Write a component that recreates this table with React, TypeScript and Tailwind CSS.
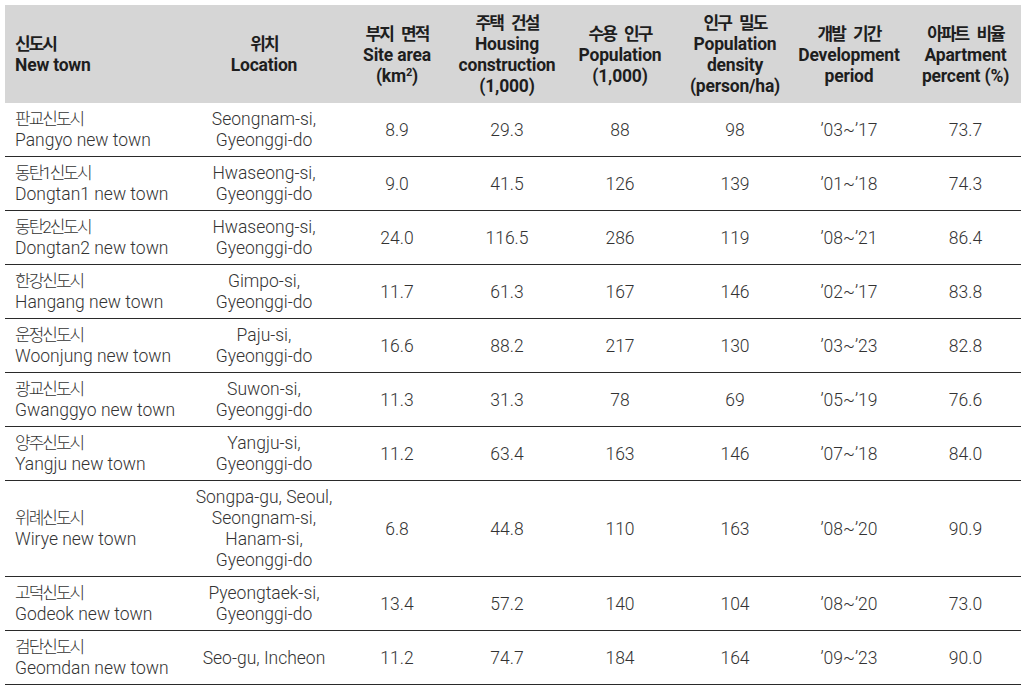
const cols = 'grid grid-cols-[185px_148px_118px_102px_124px_106px_122px_111px]';

type Row = {
  ko: string;
  en: string;
  loc: string[];
  area: string;
  housing: string;
  pop: string;
  density: string;
  period: string;
  apt: string;
};

const rows: Row[] = [
  { ko: '판교신도시', en: 'Pangyo new town', loc: ['Seongnam-si,', 'Gyeonggi-do'], area: '8.9', housing: '29.3', pop: '88', density: '98', period: '’03~’17', apt: '73.7' },
  { ko: '동탄1신도시', en: 'Dongtan1 new town', loc: ['Hwaseong-si,', 'Gyeonggi-do'], area: '9.0', housing: '41.5', pop: '126', density: '139', period: '’01~’18', apt: '74.3' },
  { ko: '동탄2신도시', en: 'Dongtan2 new town', loc: ['Hwaseong-si,', 'Gyeonggi-do'], area: '24.0', housing: '116.5', pop: '286', density: '119', period: '’08~’21', apt: '86.4' },
  { ko: '한강신도시', en: 'Hangang new town', loc: ['Gimpo-si,', 'Gyeonggi-do'], area: '11.7', housing: '61.3', pop: '167', density: '146', period: '’02~’17', apt: '83.8' },
  { ko: '운정신도시', en: 'Woonjung new town', loc: ['Paju-si,', 'Gyeonggi-do'], area: '16.6', housing: '88.2', pop: '217', density: '130', period: '’03~’23', apt: '82.8' },
  { ko: '광교신도시', en: 'Gwanggyo new town', loc: ['Suwon-si,', 'Gyeonggi-do'], area: '11.3', housing: '31.3', pop: '78', density: '69', period: '’05~’19', apt: '76.6' },
  { ko: '양주신도시', en: 'Yangju new town', loc: ['Yangju-si,', 'Gyeonggi-do'], area: '11.2', housing: '63.4', pop: '163', density: '146', period: '’07~’18', apt: '84.0' },
  { ko: '위례신도시', en: 'Wirye new town', loc: ['Songpa-gu, Seoul,', 'Seongnam-si,', 'Hanam-si,', 'Gyeonggi-do'], area: '6.8', housing: '44.8', pop: '110', density: '163', period: '’08~’20', apt: '90.9' },
  { ko: '고덕신도시', en: 'Godeok new town', loc: ['Pyeongtaek-si,', 'Gyeonggi-do'], area: '13.4', housing: '57.2', pop: '140', density: '104', period: '’08~’20', apt: '73.0' },
  { ko: '검단신도시', en: 'Geomdan new town', loc: ['Seo-gu, Incheon'], area: '11.2', housing: '74.7', pop: '184', density: '164', period: '’09~’23', apt: '90.0' },
];

// Korean lines are set tighter than the Latin text
function Ko({ children }: { children: string }) {
  return <span className="text-[17px] tracking-[-2px] [word-spacing:6px]">{children}</span>;
}

function Head({ ko, lines, left }: { ko: string; lines: React.ReactNode[]; left?: boolean }) {
  return (
    <div className={left ? 'pl-[10px] text-left' : 'text-center'}>
      <div>
        <Ko>{ko}</Ko>
      </div>
      {lines.map((l, i) => (
        <div key={i}>{l}</div>
      ))}
    </div>
  );
}

export default function App() {
  return (
    <div className="bg-white w-[1028px] h-[689px] pt-[5px] pl-[5px] font-['Roboto','Noto_Sans_CJK_KR',sans-serif] text-[17.5px] leading-[21px]">
      <div className="w-[1016px]">
        <div className={`${cols} h-[98px] items-center pt-[2px] bg-[#d6d6d6] font-bold text-[#1e1e1e] tracking-[-0.2px]`}>
          <Head left ko="신도시" lines={['New town']} />
          <Head ko="위치" lines={['Location']} />
          <Head
            ko="부지 면적"
            lines={[
              'Site area',
              <>
                (km<sup className="text-[11px]">2</sup>)
              </>,
            ]}
          />
          <Head ko="주택 건설" lines={['Housing', 'construction', '(1,000)']} />
          <Head ko="수용 인구" lines={['Population', '(1,000)']} />
          <Head ko="인구 밀도" lines={['Population', 'density', '(person/ha)']} />
          <Head ko="개발 기간" lines={['Development', 'period']} />
          <Head ko="아파트 비율" lines={['Apartment', 'percent (%)']} />
        </div>
        {rows.map((r) => (
          <div
            key={r.en}
            className={`${cols} ${r.loc.length > 2 ? 'h-[96px]' : 'h-[54px]'} items-center pt-[1px] border-b border-[#2a2a2a] font-light text-[#333]`}
          >
            <div className="pl-[10px]">
              <div>
                <Ko>{r.ko}</Ko>
              </div>
              <div>{r.en}</div>
            </div>
            <div className="text-center">
              {r.loc.map((l) => (
                <div key={l}>{l}</div>
              ))}
            </div>
            <div className="text-center">{r.area}</div>
            <div className="text-center">{r.housing}</div>
            <div className="text-center">{r.pop}</div>
            <div className="text-center">{r.density}</div>
            <div className="text-center">{r.period}</div>
            <div className="text-center">{r.apt}</div>
          </div>
        ))}
      </div>
    </div>
  );
}
